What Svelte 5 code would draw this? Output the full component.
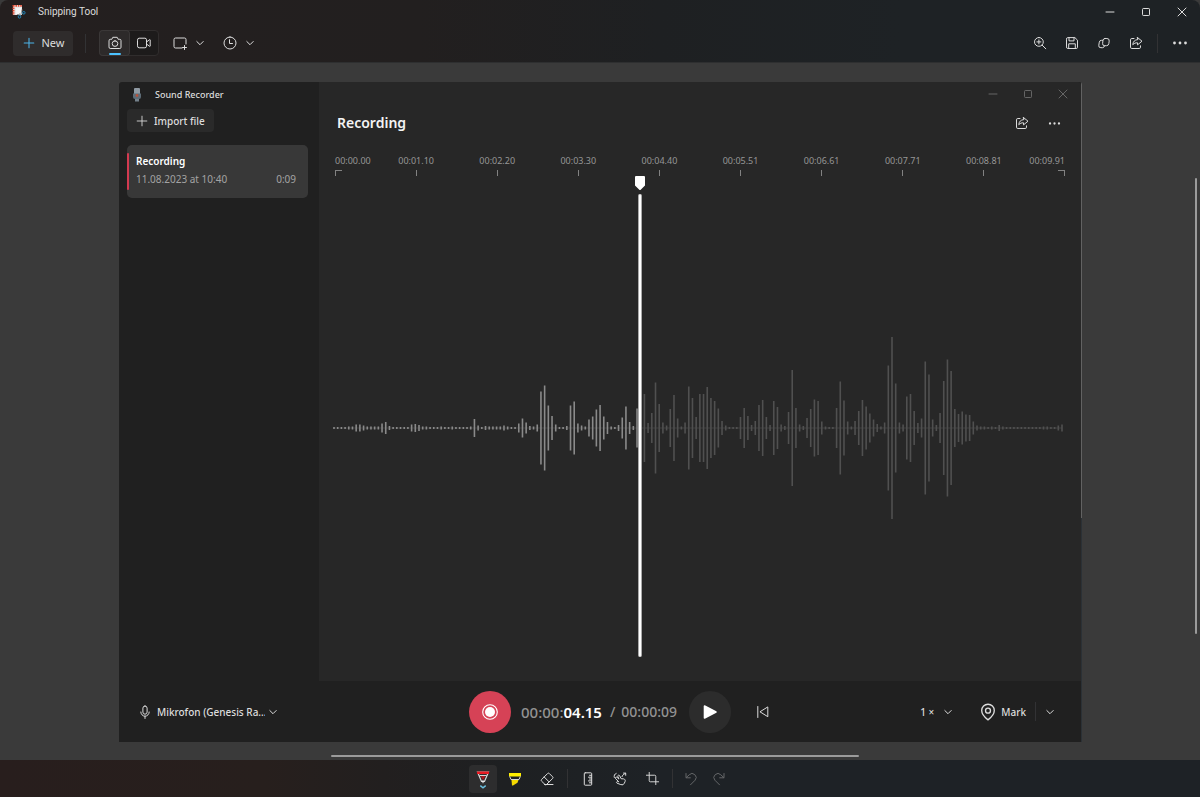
<script>
  const icons = {
    plus: 'M8 2.5v11M2.5 8h11',
    chevron: 'M4.8 6.5 8 9.7l3.2-3.2',
    minimize: 'M4 8h8',
    maximize: 'M4.5 5.2a.7.7 0 0 1 .7-.7h5.6a.7.7 0 0 1 .7.7v5.6a.7.7 0 0 1-.7.7H5.2a.7.7 0 0 1-.7-.7z',
    close: 'M4 4l8 8M12 4l-8 8',
    camera: 'M2 5.5a1.2 1.2 0 0 1 1.2-1.2h1.6l1-2h4.4l1 2h1.6A1.2 1.2 0 0 1 14 5.5v6.8a1.2 1.2 0 0 1-1.2 1.2H3.2A1.2 1.2 0 0 1 2 12.3zM8 5.8a2.8 2.8 0 1 0 0 5.6 2.8 2.8 0 0 0 0-5.6z',
    video: 'M1.5 4.8a1.6 1.6 0 0 1 1.6-1.6h5.8a1.6 1.6 0 0 1 1.6 1.6v6.4a1.6 1.6 0 0 1-1.6 1.6H3.1a1.6 1.6 0 0 1-1.6-1.6zM10.5 7l3-2.3a.4.4 0 0 1 .7.3v6a.4.4 0 0 1-.7.3L10.5 9',
    rectangle: 'M10 13H3.5A1.5 1.5 0 0 1 2 11.5v-7A1.5 1.5 0 0 1 3.5 3h9A1.5 1.5 0 0 1 14 4.5V9M12.5 10.5v4M10.5 12.5h4',
    clock: 'M8 2a6 6 0 1 0 0 12A6 6 0 0 0 8 2zM7.5 4.7V8.5h3',
    zoom: 'M6.9 2.5a4.4 4.4 0 1 0 0 8.8 4.4 4.4 0 0 0 0-8.8zM10.2 10.2l3.6 3.6M6.9 4.9v4M4.9 6.9h4',
    save: 'M2.5 3.8a1.2 1.2 0 0 1 1.2-1.2h7.2l2.6 2.6v7.1a1.2 1.2 0 0 1-1.2 1.2H3.7a1.2 1.2 0 0 1-1.2-1.2zM5 2.7v3.2h5V2.7M4.7 13.4V8.8h6.6v4.6',
    copy: 'M8.8 3.5h2.1a2.3 2.3 0 0 1 2.3 2.6l-.4 2.6a2.4 2.4 0 0 1-2.3 2H8.7a2.1 2.1 0 0 1-2.1-2.4l.4-3a2 2 0 0 1 1.8-1.8zM6.7 5.3H5.5a2.2 2.2 0 0 0-2.2 1.9l-.5 3a2.1 2.1 0 0 0 2.1 2.5h1.7a2.2 2.2 0 0 0 2-1.8',
    share: 'M6 3.5H3.8a1.3 1.3 0 0 0-1.3 1.3v7.4a1.3 1.3 0 0 0 1.3 1.3h7.4a1.3 1.3 0 0 0 1.3-1.3v-1.4M9.5 2.5l4.5 3.7-4.5 3.7V7.8c-2-.1-3.4.5-4.7 2 .2-3.2 1.9-5 4.7-5.2z',
    mic: 'M8 2a2.1 2.1 0 0 0-2.1 2.1v4a2.1 2.1 0 0 0 4.2 0v-4A2.1 2.1 0 0 0 8 2zM3.8 8a4.2 4.2 0 0 0 8.4 0M8 12.3v2.2',
    previous: 'M2.8 2.5v11M12.8 3.3v9.4L5.3 8z',
    pin: 'M8 15s-5.6-4.3-5.6-8.3a5.6 5.6 0 0 1 11.2 0C13.6 10.7 8 15 8 15zM8 4.6a2.2 2.2 0 1 0 0 4.4 2.2 2.2 0 0 0 0-4.4z',
    eraser: 'M6 13.5 2.6 10.2a1.2 1.2 0 0 1 0-1.7l6-6a1.2 1.2 0 0 1 1.7 0l3.3 3.3a1.2 1.2 0 0 1 0 1.7L7.5 13.5zM5.2 6l4.9 4.9M5.5 13.5H14',
    ruler: 'M5.2 1.8h5.6a.9.9 0 0 1 .9.9v10.6a.9.9 0 0 1-.9.9H5.2a.9.9 0 0 1-.9-.9V2.7a.9.9 0 0 1 .9-.9zM11.5 4.300H9.500M11.500 6.200H8.500M11.500 8H9.500M11.500 9.900H8.500M11.500 11.800H9.500',
    touch: 'M6.5 10.5 3.6 7.7a1 1 0 0 1 1.4-1.4l2 1.8L5.8 5.4a1 1 0 0 1 1.8-.8l1.5 3.1 2.5.2a1.8 1.8 0 0 1 1.5 2.5l-.7 1.7a2.7 2.7 0 0 1-3.6 1.5l-3.9-1.500c-.8-.4-.3-1.700.6-1.600zM2.3 6.500C1.700 4.700 2.500 3 4.200 2.400M10 5.600c.2-1.600 1.500-2 3.500-3.300M11.500 2.100h2.200v2.200',
    crop: 'M4.5 1.5v8.8a1.2 1.2 0 0 0 1.2 1.2h8.8M1.5 4.5h8.8a1.2 1.2 0 0 1 1.2 1.2v8.8',
    undo: 'M3 2.5v4.3h4.3M3.2 6.6l3-2.8a4 4 0 0 1 5.900 5.400L7.500 13.800',
    redo: 'M13 2.5v4.3H8.7M12.8 6.6l-3-2.8a4 4 0 0 0-5.900 5.400l4.600 4.600'
  };

  const times = ['00:00.00', '00:01.10', '00:02.20', '00:03.30', '00:04.40', '00:05.51', '00:06.61', '00:07.71', '00:08.81', '00:09.91'];

  // Half height of each bar of the recording, from the centre line.
  const levels = [
    1, 1, 1, 1, 1.5, 1.5, 3.5, 3.5, 2.5, 1.5, 1.5, 1.5, 1.5, 4.5, 6, 2, 1, 1, 1, 1,
    1, 3.5, 4, 3, 1.5, 1.5, 1, 1, 1, 1.5, 1, 1, 1.5, 1, 1, 1, 1, 1.5, 9, 2.5,
    1, 2, 1.5, 1.5, 1.5, 1.5, 2.5, 1.5, 1, 1, 4.5, 9.5, 5.5, 2, 1.5, 3.5, 36.5, 42.5, 22.5, 12,
    3.5, 1, 1, 2, 22.5, 26.5, 4.5, 2.5, 1.5, 8.5, 11.5, 18.5, 23, 11.5, 6, 1.5, 1, 3, 10.5, 21.5,
    6, 2, 19.5, 20, 34, 5, 15, 45.5, 24, 5.5, 2.5, 19, 33, 9.5, 1.5, 5.5, 41.5, 30, 11, 34,
    34, 41, 30, 27, 19.5, 7, 2.5, 1, 1, 1, 11, 20, 12, 3, 7, 23, 28, 11, 3, 27,
    21, 3.5, 2, 16, 58, 20, 3.5, 2, 10, 19, 28.5, 27, 6.5, 1.5, 1, 1, 20, 46.5, 27.5, 6.5,
    1.5, 7, 17, 28, 21.5, 14.5, 8.5, 4, 1.5, 5.5, 62.5, 91, 44.5, 5.5, 3.5, 31.5, 34, 17, 5, 9.5,
    66.5, 53.5, 8.5, 3, 15, 47, 68.5, 57, 19, 14, 16.5, 13.5, 13, 6.5, 2.5, 1.5, 1.5, 1, 1.5, 1,
    3, 1.5, 1, 1, 1, 1, 1, 1, 1, 1, 1, 1, 1.5, 1.5, 1, 1, 2.5, 3.5
  ];
  const mid = 92;
  const played = 83;
  const at = (i) => `${(i / (levels.length - 1)) * 100}%`;
</script>

{#snippet icon(name, size = 16, weight = 1)}
  <svg width={size} height={size} viewBox="0 0 16 16" fill="none" stroke="currentColor" stroke-width={weight} stroke-linejoin="round" stroke-linecap="round" aria-hidden="true">
    <path d={icons[name]} />
  </svg>
{/snippet}

{#snippet dots(size = 14)}
  <svg width={size} height={size} viewBox="0 0 16 16" fill="currentColor" aria-hidden="true">
    <circle cx="2.500" cy="8" r="1.400" /><circle cx="8" cy="8" r="1.400" /><circle cx="13.500" cy="8" r="1.400" />
  </svg>
{/snippet}

<div class="window">
  <header>
    <div class="titlebar">
      <svg class="logo" width="14" height="14" viewBox="0 0 14 14" aria-hidden="true">
        <rect x="1" y="0" width="9" height="10" fill="#e8e8e8" />
        <path d="M1.500 0v10M1 .8h9" stroke="#e2472e" stroke-width="2" stroke-dasharray="1.600 .8" />
        <path d="M4 3h5v6H4z" fill="#f6f6f6" />
        <path d="M5 9.500h4l1-5" stroke="#9a9a9a" fill="none" />
        <path d="M9 9.500l1.500-1.500M7.500 8l1 2.500" stroke="#bbb" />
        <circle cx="11.800" cy="7.800" r="1.300" fill="none" stroke="#2186b8" />
        <circle cx="7.500" cy="11.800" r="1.300" fill="none" stroke="#2186b8" />
      </svg>
      <span class="name">Snipping Tool</span>
      <div class="controls">
        <button aria-label="Minimize">{@render icon('minimize')}</button>
        <button aria-label="Maximize">{@render icon('maximize')}</button>
        <button aria-label="Close">{@render icon('close')}</button>
      </div>
    </div>
    <div class="toolbar">
      <button class="new"><span class="accent">{@render icon('plus', 14, 1.2)}</span>New</button>
      <span class="rule"></span>
      <div class="modes">
        <button class="active" aria-label="Snip">{@render icon('camera')}</button>
        <button aria-label="Record">{@render icon('video')}</button>
      </div>
      <button class="drop" aria-label="Snipping mode">{@render icon('rectangle')}{@render icon('chevron')}</button>
      <button class="drop" aria-label="Delay">{@render icon('clock')}{@render icon('chevron')}</button>
      <div class="actions">
        <button aria-label="Zoom">{@render icon('zoom')}</button>
        <button aria-label="Save">{@render icon('save')}</button>
        <button aria-label="Copy">{@render icon('copy')}</button>
        <button aria-label="Share">{@render icon('share')}</button>
      </div>
      <span class="rule"></span>
      <button class="more" aria-label="See more">{@render dots(16)}</button>
    </div>
  </header>

  <main>
    <section class="recorder">
      <aside>
        <div class="app-title">
          <svg width="10" height="16" viewBox="0 0 10 16" aria-hidden="true">
            <rect x="2" y="1" width="6" height="7" rx="1" fill="#8f9aa3" />
            <path d="M1 6.500h8v3.500a2 2 0 0 1-2 2H3a2 2 0 0 1-2-2z" fill="#5d6c77" />
            <rect x="3" y="12" width="4" height="2.500" fill="#74818b" />
            <circle cx="5" cy="8.500" r="1.400" fill="#b5533c" />
          </svg>
          Sound Recorder
        </div>
        <button class="import">{@render icon('plus', 14)}Import file</button>
        <button class="item">
          <strong>Recording</strong>
          <span class="meta"><span>11.08.2023 at 10:40</span><span>0:09</span></span>
        </button>
      </aside>

      <article>
        <div class="controls dim">
          <button aria-label="Minimize recorder">{@render icon('minimize')}</button>
          <button aria-label="Maximize recorder">{@render icon('maximize')}</button>
          <button aria-label="Close recorder">{@render icon('close')}</button>
        </div>
        <div class="heading">
          <h1>Recording</h1>
          <button aria-label="Share recording">{@render icon('share')}</button>
          <button aria-label="More options">{@render dots(13)}</button>
        </div>
        <div class="timeline">
          <div class="scale">
            {#each times as time}
              <div class="mark"><span>{time}</span><i></i></div>
            {/each}
          </div>
          <div class="wave">
            <svg width="100%" height="184" aria-label="Waveform">
              <line x1="0" x2="100%" y1={mid} y2={mid} stroke="#484848" stroke-width=".8" />
              {#each levels as level, i}
                <line x1={at(i)} x2={at(i)} y1={mid - level} y2={mid + level} stroke={i < played ? '#8a8a8a' : '#505050'} stroke-width="1.600" />
              {/each}
            </svg>
            <div class="playhead">
              <svg width="10" height="14" viewBox="0 0 10 14" aria-hidden="true"><path d="M1 0h8a1 1 0 0 1 1 1v8.500L5.700 13.700a1 1 0 0 1-1.400 0L0 9.500V1a1 1 0 0 1 1-1z" fill="#fff" /></svg>
              <span></span>
            </div>
          </div>
        </div>
      </article>

      <footer>
        <label class="pick source">
          {@render icon('mic')}
          <select aria-label="Microphone"><option>Mikrofon (Genesis Ra...</option></select>
          {@render icon('chevron')}
        </label>
        <div class="transport">
          <button class="record" aria-label="Record audio">
            <svg width="16" height="16" viewBox="0 0 16 16" aria-hidden="true"><circle cx="8" cy="8" r="7.300" fill="none" stroke="#fff" stroke-width="1.100" /><circle cx="8" cy="8" r="5" fill="#fff" /></svg>
          </button>
          <p class="time">00:00:<b>04.15</b></p>
          <p class="total"><span>/</span>00:00:09</p>
          <button class="play" aria-label="Play">
            <svg width="16" height="16" viewBox="0 0 16 16" aria-hidden="true"><path d="M2.500 2v12L14 8z" fill="#fff" stroke="#fff" stroke-width="1.600" stroke-linejoin="round" /></svg>
          </button>
        </div>
        <div class="extras">
          <button class="skip" aria-label="Skip back">{@render icon('previous')}</button>
          <label class="pick speed">
            <select aria-label="Playback speed"><option>1 ×</option></select>
            {@render icon('chevron')}
          </label>
          <button class="pin">{@render icon('pin', 18, 1.2)}Mark</button>
          <span class="rule"></span>
          <button class="marks" aria-label="Marks">{@render icon('chevron')}</button>
        </div>
      </footer>
    </section>
    <div class="scroll down"></div>
    <div class="scroll across"></div>
  </main>

  <nav aria-label="Markup tools">
    <button class="active" aria-label="Ballpoint pen">
      <svg width="16" height="22" viewBox="0 0 16 22" fill="none" aria-hidden="true">
        <path d="M2.500 4h11l-4 9.500h-3z" stroke="#d8d8d8" stroke-width="1.200" />
        <path d="M2 3.500h12V6H2z" fill="#e81b23" />
        <path d="M5.500 7.500h5l-1.700 4H7.200z" fill="#a6191f" />
        <path d="M4.500 7.500h7" stroke="#d8d8d8" />
        <path d="M6.600 12.500h2.800L8 15.800z" fill="#e8e8e8" />
        <path d="M5.300 17.600 8 19.800l2.700-2.200" stroke="#6cc0e0" stroke-width="1.400" />
      </svg>
    </button>
    <button aria-label="Highlighter">
      <svg width="16" height="16" viewBox="0 0 16 16" aria-hidden="true">
        <path d="M2 2h12v3.500H2z" fill="#ffee00" />
        <path d="M2.700 5.500 4 8.500h8l1.300-3" fill="none" stroke="#d8d8d8" />
        <path d="M4.500 9h7l-1 2.800L6 14.500H5z" fill="#f5d900" />
      </svg>
    </button>
    <button aria-label="Eraser">{@render icon('eraser')}</button>
    <span class="rule"></span>
    <button aria-label="Ruler">{@render icon('ruler')}</button>
    <button aria-label="Touch writing">{@render icon('touch')}</button>
    <button aria-label="Crop">{@render icon('crop', 15)}</button>
    <span class="rule"></span>
    <button class="off" aria-label="Undo">{@render icon('undo')}</button>
    <button class="off" aria-label="Redo">{@render icon('redo')}</button>
  </nav>
</div>

<style>
  :global(body) { background: #3a3a3a; }
  * { box-sizing: border-box; }
  .window {
    display: flex;
    flex-direction: column;
    min-height: 100vh;
    overflow: hidden;
    border-radius: 8px 8px 0 0;
    background: #3a3a3a;
    color: #dcdcdc;
    font: 11px/16px "Noto Sans", "Open Sans", sans-serif;
  }
  button, select {
    margin: 0;
    padding: 0;
    border: 0;
    background: none;
    color: inherit;
    font: inherit;
  }
  button { display: flex; align-items: center; justify-content: center; flex: none; }
  select { appearance: none; }
  svg { display: block; flex: none; }
  p, h1 { margin: 0; }
  .rule { width: 1px; height: 19px; background: #323234; flex: none; }

  header {
    background: linear-gradient(90deg, #241f1f 0, #221f1f 35%, #1e2022 55%, #1e2225 75%);
    border-bottom: 1px solid #2e2f30;
  }
  .titlebar { display: flex; align-items: center; height: 24px; padding-left: 12px; }
  .logo { margin-right: 12px; }
  .name { font-family: Roboto, sans-serif; font-size: 10px; }
  .controls { display: flex; margin-left: auto; }
  .controls button { width: 36px; height: 24px; }
  .toolbar { display: flex; align-items: center; height: 38px; padding: 0 5px 0 13px; }
  .new {
    gap: 6px;
    width: 60px;
    height: 25px;
    margin-right: 12px;
    border-radius: 4px;
    background: #2f2c2c;
  }
  .accent { color: #4cb3e8; }
  .modes {
    display: flex;
    height: 26px;
    margin: 0 13px;
    border: 1px solid #302d2d;
    border-radius: 4px;
    background: #1d1b1b;
  }
  .modes button { position: relative; width: 29px; height: 24px; }
  .modes .active { background: #2d2a2a; border-radius: 3px; box-shadow: 0 0 0 1px #3b3838; }
  .modes .active::after {
    content: "";
    position: absolute;
    left: 9px;
    bottom: 0;
    width: 12px;
    height: 2px;
    border-radius: 1px;
    background: #4cc2ff;
  }
  .drop { gap: 4px; margin-right: 14px; }
  .actions { display: flex; margin-left: auto; margin-right: 5px; }
  .actions button { width: 32px; height: 26px; }
  .more { width: 30px; height: 26px; margin-left: 7px; }

  main { position: relative; display: flex; flex: 1; padding: 19px 118px 18px 119px; }
  .recorder {
    display: grid;
    flex: 1;
    grid-template: 1fr 61px / 200px 1fr;
    padding-right: 1px;
    background: linear-gradient(#626262 66%, #2b3136 66%) right / 1px 100% no-repeat, #202020;
    border-radius: 3px 3px 0 0;
  }
  aside { padding: 4px 11px 0 8px; }
  .app-title { display: flex; align-items: center; gap: 13px; height: 17px; padding-left: 5px; font-size: 9px; font-weight: 500; }
  .import {
    gap: 5px;
    height: 23px;
    margin-top: 6px;
    padding: 0 9px 0 8px;
    border-radius: 4px;
    background: #2a2a2a;
    font-size: 10px;
    font-weight: 500;
  }
  .item {
    position: relative;
    display: block;
    width: 100%;
    margin-top: 13px;
    padding: 8px 12px 10px 9px;
    border-radius: 5px;
    background: #383838;
    font-size: 10px;
    text-align: left;
  }
  .item::before { content: ""; position: absolute; left: 0; top: 8px; bottom: 8px; width: 2px; border-radius: 1px; background: #d33a50; }
  .item strong { display: block; font-weight: 600; line-height: 17px; color: #fff; }
  .meta { display: flex; justify-content: space-between; line-height: 18px; color: #a3a3a3; }

  article { display: flex; flex-direction: column; min-width: 0; background: #272727; border-radius: 0 3px 0 0; }
  .dim { padding-right: 1px; color: #666; }
  .dim button { width: 35px; }
  .heading { display: flex; align-items: center; height: 34px; padding: 0 11px 0 18px; }
  .heading h1 { flex: 1; font-size: 14px; font-weight: 600; line-height: 20px; color: #f4f4f4; }
  .heading button { width: 32px; height: 26px; }
  .timeline { display: flex; flex: 1; flex-direction: column; padding: 12px 16px 24px; }
  .scale {
    display: grid;
    grid-template-columns: 1fr repeat(8, 2fr) 1fr;
    color: #969696;
    font-size: 9px;
    line-height: 17px;
  }
  .mark { display: flex; flex-direction: column; align-items: center; min-width: 0; white-space: nowrap; }
  .mark i { width: 1px; height: 6px; background: #828282; margin-top: 1px; }
  .mark:first-child { align-items: flex-start; }
  .mark:last-child { align-items: flex-end; }
  .mark:first-child i, .mark:last-child i { width: 7px; background: none; border-top: 1px solid #828282; }
  .mark:first-child i { border-left: 1px solid #828282; }
  .mark:last-child i { border-right: 1px solid #828282; }
  .wave { position: relative; display: flex; flex: 1; align-items: center; margin: 0 3px 0 -1px; padding-top: 23px; }
  .wave > svg { overflow: visible; }
  .playhead {
    position: absolute;
    inset: 0 auto 0 42%;
    display: flex;
    flex-direction: column;
    align-items: center;
    gap: 4px;
    width: 10px;
    margin-left: -5px;
  }
  .playhead span { flex: 1; width: 4px; border-radius: 2px; background: #fff; border-inline: 1px solid #aaa; }

  footer {
    grid-column: 1 / -1;
    display: grid;
    grid-template-columns: 1fr auto 1fr;
    align-items: center;
    font-size: 10px;
    font-weight: 500;
  }
  .pick { display: flex; align-items: center; }
  .source { padding-left: 18px; }
  .source select { width: 108px; margin-left: 4px; }
  .transport { display: flex; align-items: center; color: #929292; }
  .record, .play { width: 42px; height: 42px; border-radius: 50%; }
  .record { background: #d64256; }
  .play { background: #2c2c2c; }
  .time { margin-left: 10px; font-size: 15px; line-height: 20px; }
  .time b { font-weight: 600; color: #fff; }
  .total { display: flex; margin: 0 12px 0 8px; font-size: 14px; line-height: 20px; }
  .total span { margin-right: 6px; }
  .extras { display: flex; align-items: center; padding-right: 23px; }
  .skip { width: 26px; height: 26px; margin: 0 auto 0 19px; }
  .speed { gap: 5px; margin-right: 23px; }
  .pin { gap: 4px; margin-right: 9px; }
  .marks { margin-left: 6px; }

  .scroll { position: absolute; border-radius: 1px; background: #9b9b9b; }
  .down { right: 3px; top: 16.500%; height: 65.400%; width: 2px; }
  .across { bottom: 3px; left: 27.600%; width: 44%; height: 2px; }

  nav {
    display: flex;
    align-items: center;
    justify-content: center;
    gap: 4px;
    height: 37px;
    background: linear-gradient(90deg, #281e1d 0, #271f1d 22%, #221f1f 32%, #1e2022 42%, #1e2226 55%);
  }
  nav button { width: 28px; height: 28px; border-radius: 4px; }
  nav .active { background: #2d2d2e; }
  nav .rule { margin: 0 2px; }
  nav .off { width: 24px; color: #646668; }
</style>
